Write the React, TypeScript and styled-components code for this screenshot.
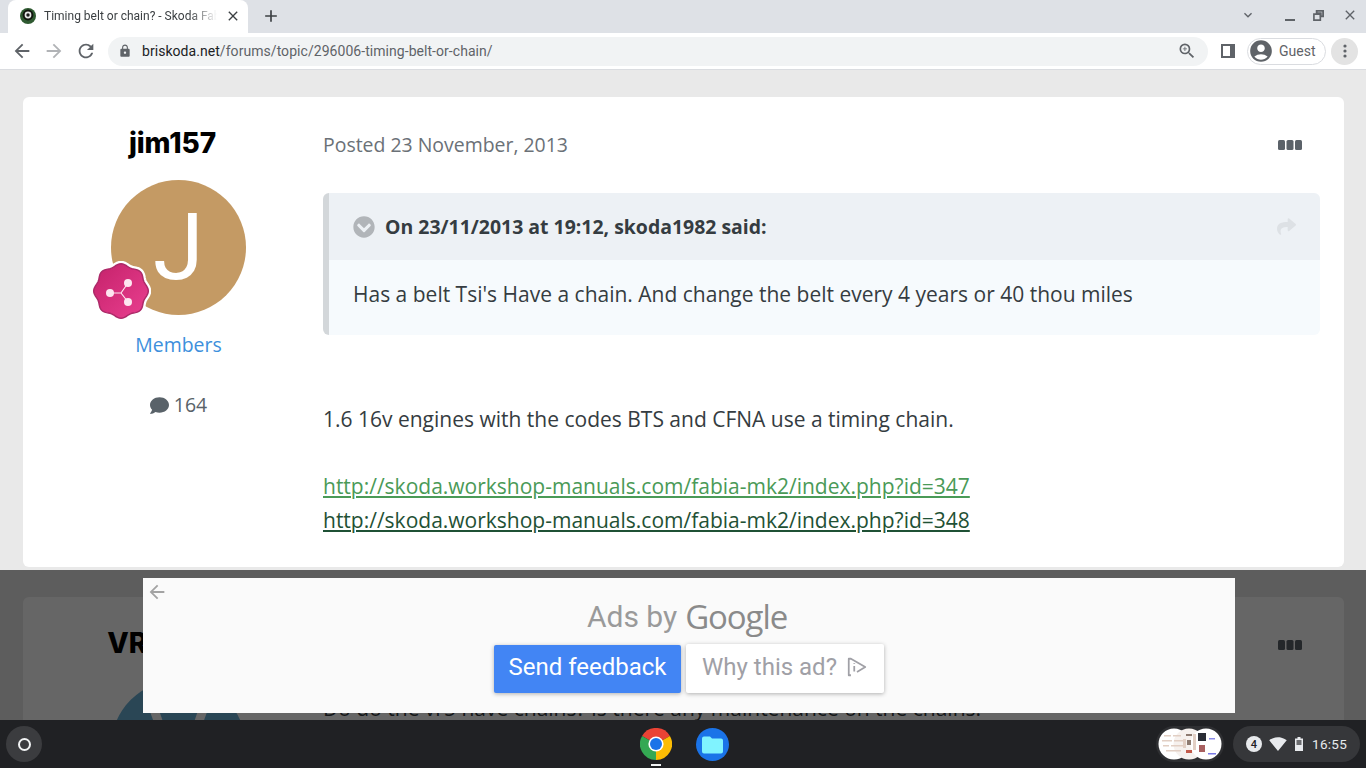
import React from 'react'
import styled, { createGlobalStyle } from 'styled-components'
import { FaChevronCircleDown, FaComment, FaShare } from 'react-icons/fa'
import {
  MdAccountCircle,
  MdAdd,
  MdArrowBack,
  MdArrowForward,
  MdClose,
  MdExpandMore,
  MdLock,
  MdRefresh,
  MdSignalWifi4Bar,
  MdZoomIn,
} from 'react-icons/md'

const GlobalStyle = createGlobalStyle`
  html, body {
    margin: 0;
    padding: 0;
    overflow: hidden;
  }
  * {
    box-sizing: border-box;
  }
`

const Screen = styled.div`
  display: flex;
  flex-direction: column;
  width: 1366px;
  height: 768px;
  overflow: hidden;
  font-family: 'Roboto', 'Liberation Sans', sans-serif;
`

/* browser chrome */
const TabStrip = styled.div`
  display: flex;
  align-items: flex-end;
  height: 33px;
  flex-shrink: 0;
  padding-left: 8px;
  background-color: #dee1e6;
  color: #45494d;
`
const Tab = styled.div`
  display: flex;
  align-items: center;
  width: 240px;
  height: 33px;
  padding: 0 7px 2px 12px;
  background-color: #fff;
  border-radius: 8px 8px 0 0;
  font-size: 12px;
`
const TabTitle = styled.span`
  flex: 1;
  margin: 0 8px 0 8px;
  overflow: hidden;
  white-space: nowrap;
  color: #3c4043;
  -webkit-mask-image: linear-gradient(90deg, #000 84%, transparent 100%);
  mask-image: linear-gradient(90deg, #000 84%, transparent 100%);
`
const NewTab = styled.div`
  display: flex;
  align-items: center;
  height: 33px;
  padding: 0 0 2px 13px;
  flex: 1;
`
const WindowButtons = styled.div`
  display: flex;
  align-items: center;
  height: 33px;
  padding-right: 8px;
  padding-bottom: 3px;
`
const WindowSlot = styled.div<{ $mr?: number }>`
  display: flex;
  justify-content: center;
  align-items: center;
  width: 16px;
  margin-right: ${p => p.$mr || 0}px;
`
const MinimizeMark = styled.div`
  width: 10px;
  height: 2px;
  margin-top: 9px;
  background-color: #5f6368;
`
const Toolbar = styled.div`
  display: flex;
  align-items: center;
  height: 37px;
  flex-shrink: 0;
  padding: 0 8px 0 10px;
  background-color: #fff;
  border-bottom: 1px solid #dadce0;
`
const NavButton = styled.div<{ $off?: boolean }>`
  display: flex;
  justify-content: center;
  align-items: center;
  width: 24px;
  margin-right: 8px;
  color: ${p => (p.$off ? '#b1b3b6' : '#5f6368')};
`
const Omnibox = styled.div`
  display: flex;
  align-items: center;
  flex: 1;
  height: 29px;
  margin: 0 13px 0 2px;
  padding: 0 9px 0 10px;
  background-color: #f1f3f4;
  border-radius: 15px;
  font-size: 14px;
  color: #5f6368;
`
const Url = styled.div`
  flex: 1;
  margin-left: 10px;
  letter-spacing: 0.05px;
  b {
    font-weight: 400;
    color: #202124;
  }
`
const ZoomMark = styled.span`
  display: flex;
  margin-right: 2px;
`
const GuestPill = styled.div`
  display: flex;
  align-items: center;
  width: 79px;
  height: 27px;
  margin: 0 5px 0 12px;
  padding-left: 0;
  border: 1px solid #dadce0;
  border-radius: 14px;
  font-size: 14px;
  color: #5f6368;
  gap: 5px;
`
const Kebab = styled.div`
  display: flex;
  justify-content: center;
  align-items: center;
  width: 27px;
  height: 27px;
  border-radius: 50%;
  background-color: #e3e3e3;
`

/* forum page */
const Page = styled.div`
  position: relative;
  flex: 1;
  overflow: hidden;
  padding: 27px 22px 0 23px;
  background-color: #e9e9e9;
  font-family: 'Open Sans', 'Liberation Sans', sans-serif;
  color: #353c41;
`
const Card = styled.article`
  display: grid;
  grid-template-columns: 300px 1fr;
  height: 470px;
  margin-bottom: 30px;
  padding-right: 24px;
  background-color: #fff;
  border-radius: 6px;
`
const Author = styled.aside`
  display: flex;
  flex-direction: column;
  align-items: center;
  padding: 27px 0 0 11px;
`
const AuthorName = styled.h3`
  margin: 0 12px 18px 0;
  font-family: 'Inter', 'Liberation Sans', sans-serif;
  font-size: 28px;
  line-height: 38px;
  font-weight: 800;
  letter-spacing: -0.1px;
  white-space: nowrap;
  color: #000;
`
const Avatar = styled.div<{ $bg: string }>`
  position: relative;
  display: flex;
  justify-content: center;
  align-items: center;
  width: 135px;
  height: 135px;
  flex-shrink: 0;
  border-radius: 50%;
  background-color: ${p => p.$bg};
  color: #fff;
  font-family: 'Roboto', 'Liberation Sans', sans-serif;
  font-size: 92px;
  font-weight: 400;
  line-height: 1;
`
const RankBadge = styled.svg`
  position: absolute;
  left: -20px;
  top: 81px;
`
const Rank = styled.div`
  margin-top: 14px;
  font-size: 19.45px;
  line-height: 32px;
  color: #3d8fdc;
`
const PostCount = styled.div`
  display: flex;
  align-items: center;
  gap: 5px;
  margin-top: 28px;
  font-size: 19.45px;
  line-height: 32px;
  color: #596269;
`
const Content = styled.div`
  padding-top: 31px;
`
const PostHead = styled.div`
  display: flex;
  justify-content: space-between;
  align-items: center;
  height: 32px;
  padding-right: 18px;
  font-size: 19.45px;
  color: #6b7177;
`
const DotsWrap = styled.span`
  display: flex;
  margin-top: 2px;
`
const Quote = styled.blockquote`
  margin: 33px 0 67px;
  background-color: #f6fafd;
  border-left: 6px solid #d3d7da;
  border-radius: 6px;
  overflow: hidden;
`
const QuoteHead = styled.div`
  display: flex;
  align-items: center;
  justify-content: space-between;
  height: 67px;
  padding: 0 24px;
  background-color: #edf1f5;
  font-size: 19.45px;
  font-weight: 700;
`
const QuoteTitle = styled.div`
  display: flex;
  align-items: center;
  gap: 10px;
`
const QuoteBody = styled.div`
  height: 75px;
  padding: 18px 24px 0;
  font-size: 21px;
  line-height: 32px;
`
const PostText = styled.p<{ $mt?: number }>`
  margin: ${p => p.$mt || 0}px 0 33px;
  font-size: 21px;
  line-height: 34px;
`
const PostLink = styled.a<{ $dark?: boolean }>`
  display: block;
  width: fit-content;
  font-size: 21px;
  line-height: 34px;
  text-decoration: underline;
  color: ${p => (p.$dark ? '#1f5135' : '#4a9a57')};
`

/* ad overlay */
const AdShade = styled.div`
  position: absolute;
  left: 0;
  right: 0;
  bottom: 0;
  display: flex;
  justify-content: center;
  height: 150px;
  padding: 8px 0 0 12px;
  background-color: rgba(0, 0, 0, 0.6);
`
const AdBox = styled.div`
  position: relative;
  display: flex;
  flex-direction: column;
  align-items: center;
  width: 1092px;
  height: 135px;
  padding-top: 19px;
  background-color: #fafafa;
  font-family: 'Roboto', 'Liberation Sans', sans-serif;
`
const AdBack = styled.div`
  position: absolute;
  left: 3px;
  top: 3px;
  color: #a3a3a3;
`
const AdTitle = styled.div`
  display: flex;
  align-items: center;
  gap: 8px;
  height: 38px;
  margin-right: 4px;
  font-size: 30px;
  color: #9a9a9a;
`
const GoogleWord = styled.span`
  font-family: 'Open Sans', 'Liberation Sans', sans-serif;
  font-size: 33px;
  font-weight: 500;
  letter-spacing: -1.1px;
  color: #8a8a8a;
`
const AdButtons = styled.div`
  display: flex;
  align-items: center;
  gap: 5px;
  margin-top: 9px;
`
const AdButton = styled.div<{ $primary?: boolean }>`
  display: flex;
  align-items: center;
  justify-content: center;
  gap: 9px;
  width: ${p => (p.$primary ? 187 : 198)}px;
  height: ${p => (p.$primary ? 48 : 49)}px;
  padding-bottom: 3px;
  border-radius: 2px;
  font-size: 24px;
  background-color: ${p => (p.$primary ? '#4285f4' : '#fff')};
  color: ${p => (p.$primary ? '#fff' : '#a0a0a6')};
  box-shadow: 0 1px 4px rgba(0, 0, 0, 0.3);
`

/* chromeos shelf */
const Shelf = styled.div`
  display: grid;
  grid-template-columns: 1fr auto 1fr;
  align-items: center;
  height: 48px;
  flex-shrink: 0;
  padding: 0 6px;
  background-color: #202124;
`
const Launcher = styled.div`
  display: flex;
  justify-content: center;
  align-items: center;
  width: 36px;
  height: 36px;
  border-radius: 50%;
  background-color: #3b3c3f;
`
const LauncherRing = styled.div`
  width: 13px;
  height: 13px;
  border: 2px solid #f1f3f4;
  border-radius: 50%;
`
const ShelfApps = styled.div`
  display: flex;
  gap: 24px;
  margin-left: 2px;
`
const ShelfApp = styled.div`
  position: relative;
  width: 32px;
  height: 32px;
`
const RunningDot = styled.div`
  position: absolute;
  left: 11px;
  bottom: -6px;
  width: 10px;
  height: 2px;
  background-color: #f1f3f4;
`
const ShelfRight = styled.div`
  display: flex;
  justify-content: flex-end;
  align-items: center;
  gap: 9px;
`
const StatusPill = styled.div`
  display: flex;
  align-items: center;
  width: 127px;
  height: 36px;
  padding-left: 13px;
  border-radius: 18px;
  background-color: #36373a;
  color: #e8eaed;
  font-size: 13.5px;
`
const NotifyCount = styled.div`
  display: flex;
  justify-content: center;
  align-items: center;
  width: 16px;
  height: 16px;
  margin-right: 7px;
  border-radius: 50%;
  background-color: #e8eaed;
  color: #202124;
  font-size: 11px;
  font-weight: 500;
`
const BatteryGlyph = styled.svg`
  margin: 0 9px 0 8px;
`
const Clock = styled.span`
  letter-spacing: 0.3px;
`

const Favicon = () => (
  <svg width='16' height='16' viewBox='0 0 16 16'>
    <circle cx='8' cy='8' r='8' fill='#2f5a31' />
    <circle cx='8' cy='7' r='5.4' fill='#12150f' />
    <circle cx='8' cy='7' r='3.4' fill='#e8e8e8' />
    <circle cx='8' cy='7' r='1.7' fill='#1a1a1a' />
  </svg>
)

const Restore = () => (
  <svg width='11' height='11' viewBox='0 0 12 12' fill='none' stroke='#5f6368' strokeWidth='2'>
    <path d='M4 1h7v6h-2.5v-3.500h-4.500z' />
    <path d='M1 4.500h7v6.500h-7z' strokeWidth='1.800' />
  </svg>
)

const SidePanel = () => (
  <svg width='14' height='14' viewBox='0 0 14 14'>
    <path d='M0 0h14v14h-14z M2 2v10h7v-10z' fill='#5f6368' fillRule='evenodd' />
  </svg>
)

const Dots = () => (
  <svg width='4' height='14' viewBox='0 0 4 14' fill='#5f6368'>
    <circle cx='2' cy='2' r='1.600' />
    <circle cx='2' cy='7' r='1.600' />
    <circle cx='2' cy='12' r='1.600' />
  </svg>
)

const MoreDots = () => (
  <svg width='24' height='10' viewBox='0 0 24 10' fill='#5b6269'>
    <rect x='0' y='0' width='7' height='10' rx='1.500' />
    <rect x='8.500' y='0' width='7' height='10' rx='1.500' />
    <rect x='17' y='0' width='7' height='10' rx='1.500' />
  </svg>
)

// scalloped outline of the rank badge
const badgePath = (() => {
  const pts: string[] = []
  for (let i = 0; i < 96; i++) {
    const a = (i / 96) * Math.PI * 2
    const r = 26 + 1.3 * Math.cos(a * 8)
    pts.push(`${(30 + r * Math.sin(a)).toFixed(2)},${(30 - r * Math.cos(a)).toFixed(2)}`)
  }
  return 'M' + pts.join('L') + 'Z'
})()

const Badge = () => (
  <RankBadge width='60' height='60' viewBox='0 0 60 60'>
    <defs>
      <linearGradient id='rank' x1='0' y1='0' x2='1' y2='1'>
        <stop offset='0' stopColor='#c4226a' />
        <stop offset='1' stopColor='#ea3f90' />
      </linearGradient>
    </defs>
    <path d={badgePath} fill='#fff' stroke='#fff' strokeWidth='6' strokeLinejoin='round' />
    <path d={badgePath} fill='url(#rank)' stroke='#ad2a69' strokeWidth='1.500' />
    <g fill='#fde6f0' stroke='#fde6f0'>
      <path d='M19 32H30L37 22M30 32L37 41' strokeWidth='1.200' fill='none' />
      <circle cx='19' cy='32' r='4' stroke='none' />
      <circle cx='37' cy='22' r='4' stroke='none' />
      <circle cx='37' cy='41' r='4' stroke='none' />
    </g>
  </RankBadge>
)

const ChromeLogo = () => (
  <svg width='32' height='32' viewBox='0 0 32 32'>
    <path d='M16 16L2.100 8A16 16 0 0 1 29.900 8z' fill='#ea4335' />
    <path d='M16 16L16 32A16 16 0 0 1 2.100 8z' fill='#34a853' />
    <path d='M16 16L29.900 8A16 16 0 0 1 16 32z' fill='#fbbc04' />
    <circle cx='16' cy='16' r='7.600' fill='#fff' />
    <circle cx='16' cy='16' r='6' fill='#1a73e8' />
  </svg>
)

const FilesLogo = () => (
  <svg width='33' height='33' viewBox='0 0 33 33'>
    <circle cx='16.500' cy='16.500' r='16.500' fill='#1a73e8' />
    <path d='M6 10.500a2 2 0 0 1 2-2h6l2 2h9a2 2 0 0 1 2 2v11a2 2 0 0 1-2 2h-17a2 2 0 0 1-2-2z' fill='#80f3ff' />
  </svg>
)

const Thumbs = () => (
  <svg width='68' height='36' viewBox='0 0 68 36'>
    <rect x='0' y='0' width='68' height='36' rx='18' fill='#2e2f32' />
    <circle cx='18' cy='18' r='15.500' fill='#fff' />
    <circle cx='33' cy='18' r='15.500' fill='#f6f1ee' />
    <circle cx='50' cy='18' r='15.500' fill='#fff' />
    <g fill='#e2cfc4'>
      <rect x='8' y='9' width='7' height='1.500' />
      <rect x='17' y='9' width='8' height='1.500' />
      <rect x='6' y='14' width='10' height='1.500' />
      <rect x='18' y='14' width='9' height='1.500' />
      <rect x='7' y='19' width='6' height='1.500' />
      <rect x='15' y='19' width='12' height='1.500' />
      <rect x='10' y='24' width='15' height='1.500' />
      <rect x='27' y='13' width='3' height='9' />
      <rect x='37' y='8' width='3' height='16' />
    </g>
    <g fill='#8d7a70'>
      <rect x='30' y='8' width='6' height='2' />
      <rect x='31' y='14' width='4' height='5' />
      <rect x='30' y='24' width='6' height='3' fill='#c25a4a' />
    </g>
    <rect x='42' y='7' width='8' height='8' fill='#2a2d35' />
    <rect x='43' y='19' width='6' height='7' fill='#a86060' />
    <rect x='53' y='12' width='6' height='1.500' fill='#8a8ae6' />
    <rect x='52' y='27' width='8' height='1.500' fill='#7a7ae6' />
  </svg>
)

const AdChoice = () => (
  <svg width='22' height='22' viewBox='0 0 20 20' fill='none' stroke='#a0a0a6' strokeWidth='1.600' strokeLinejoin='round'>
    <path d='M4.500 17.500h-2v-15h2l13 7.500-7.500 4.500' />
    <path d='M7.500 9v5M7.500 6.500v0.800' />
  </svg>
)

const Battery = () => (
  <BatteryGlyph width='8' height='14' viewBox='0 0 8 14'>
    <path d='M2.500 0h3v1.500h2.500v12.500h-8v-12.500h2.500z' fill='#e8eaed' />
    <rect x='1.500' y='3' width='5' height='5' fill='#6a6b6e' />
  </BatteryGlyph>
)

type PostProps = {
  name: string
  letter: string
  tone: string
  count: string
  children: React.ReactNode
}

const Post = ({ name, letter, tone, count, children }: PostProps) => (
  <Card>
    <Author>
      <AuthorName>{name}</AuthorName>
      <Avatar $bg={tone}>
        {letter}
        <Badge />
      </Avatar>
      <Rank>Members</Rank>
      <PostCount>
        <FaComment size={19} />
        {count}
      </PostCount>
    </Author>
    <Content>
      <PostHead>
        <span>Posted 23 November, 2013</span>
        <DotsWrap>
          <MoreDots />
        </DotsWrap>
      </PostHead>
      {children}
    </Content>
  </Card>
)

const App = () => (
  <Screen>
    <GlobalStyle />
    <TabStrip>
      <Tab>
        <Favicon />
        <TabTitle>Timing belt or chain? - Skoda Fabia</TabTitle>
        <MdClose size={16} color='#3c4043' />
      </Tab>
      <NewTab>
        <MdAdd size={20} color='#3c4043' />
      </NewTab>
      <WindowButtons>
        <WindowSlot $mr={26}>
          <MdExpandMore size={22} color='#5f6368' />
        </WindowSlot>
        <WindowSlot $mr={12}>
          <MinimizeMark />
        </WindowSlot>
        <WindowSlot $mr={16}>
          <Restore />
        </WindowSlot>
        <WindowSlot>
          <MdClose size={18} color='#5f6368' />
        </WindowSlot>
      </WindowButtons>
    </TabStrip>
    <Toolbar>
      <NavButton>
        <MdArrowBack size={22} />
      </NavButton>
      <NavButton $off>
        <MdArrowForward size={22} />
      </NavButton>
      <NavButton>
        <MdRefresh size={22} />
      </NavButton>
      <Omnibox>
        <MdLock size={14} />
        <Url>
          <b>briskoda.net</b>/forums/topic/296006-timing-belt-or-chain/
        </Url>
        <ZoomMark>
          <MdZoomIn size={20} />
        </ZoomMark>
      </Omnibox>
      <SidePanel />
      <GuestPill>
        <MdAccountCircle size={26} />
        Guest
      </GuestPill>
      <Kebab>
        <Dots />
      </Kebab>
    </Toolbar>
    <Page>
      <Post name='jim157' letter='J' tone='#c49a64' count='164'>
        <Quote>
          <QuoteHead>
            <QuoteTitle>
              <FaChevronCircleDown size={22} color='#b1b5b9' />
              On 23/11/2013 at 19:12, skoda1982 said:
            </QuoteTitle>
            <FaShare size={19} color='#dde1e5' />
          </QuoteHead>
          <QuoteBody>Has a belt Tsi's Have a chain. And change the belt every 4 years or 40 thou miles</QuoteBody>
        </Quote>
        <PostText>1.6 16v engines with the codes BTS and CFNA use a timing chain.</PostText>
        <PostLink href='#'>http://skoda.workshop-manuals.com/fabia-mk2/index.php?id=347</PostLink>
        <PostLink href='#' $dark>
          http://skoda.workshop-manuals.com/fabia-mk2/index.php?id=348
        </PostLink>
      </Post>
      <Post name='VRS_Fabi' letter='V' tone='#69afd4' count='1'>
        <PostText $mt={31}>Do do the vr5 have chains? Is there any maintenance on the chains.</PostText>
      </Post>
      <AdShade>
        <AdBox>
          <AdBack>
            <MdArrowBack size={22} />
          </AdBack>
          <AdTitle>
            Ads by <GoogleWord>Google</GoogleWord>
          </AdTitle>
          <AdButtons>
            <AdButton $primary>Send feedback</AdButton>
            <AdButton>
              Why this ad? <AdChoice />
            </AdButton>
          </AdButtons>
        </AdBox>
      </AdShade>
    </Page>
    <Shelf>
      <Launcher>
        <LauncherRing />
      </Launcher>
      <ShelfApps>
        <ShelfApp>
          <ChromeLogo />
          <RunningDot />
        </ShelfApp>
        <ShelfApp>
          <FilesLogo />
        </ShelfApp>
      </ShelfApps>
      <ShelfRight>
        <Thumbs />
        <StatusPill>
          <NotifyCount>4</NotifyCount>
          <MdSignalWifi4Bar size={18} />
          <Battery />
          <Clock>16:55</Clock>
        </StatusPill>
      </ShelfRight>
    </Shelf>
  </Screen>
)

export default App
